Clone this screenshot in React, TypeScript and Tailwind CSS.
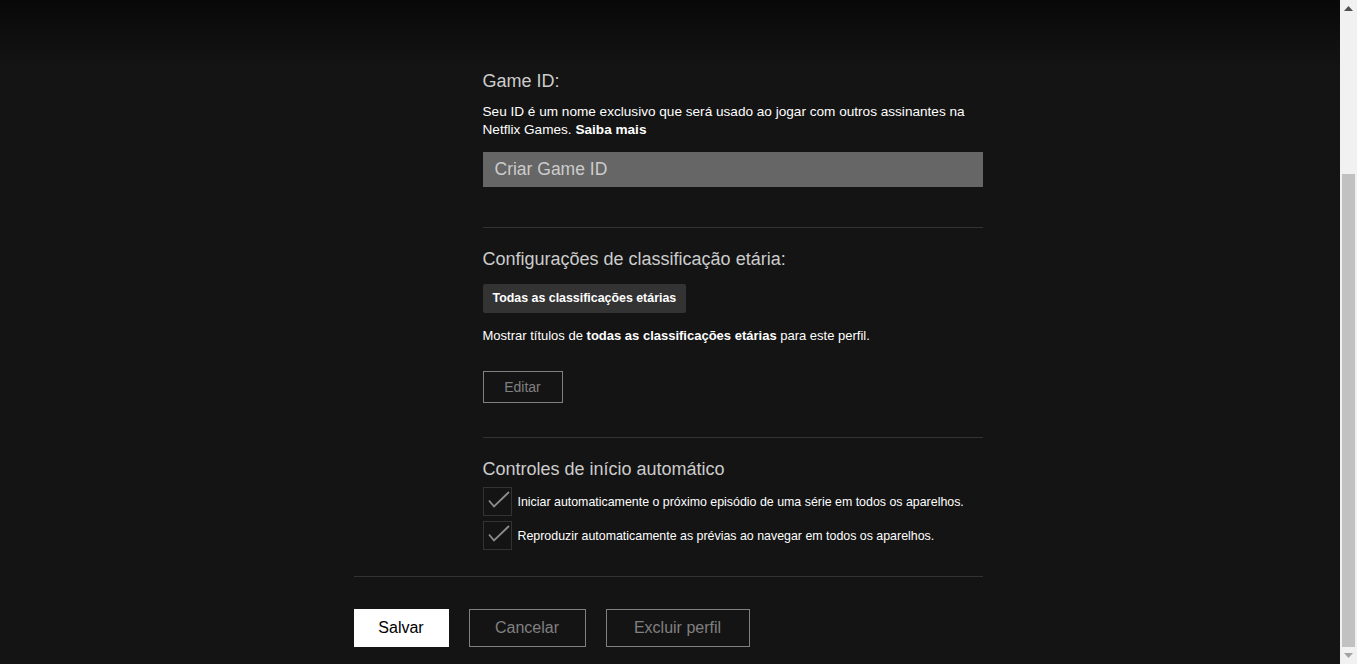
import React from "react";

// Faux classic scrollbar, page is shown scrolled to the bottom
function Scrollbar() {
  return (
    <div className="flex h-full w-[17px] shrink-0 flex-col bg-[#f1f1f1]">
      <div className="flex h-[17px] items-center justify-center">
        <svg width="9" height="5" viewBox="0 0 9 5">
          <path d="M0 5 L4.5 0 L9 5 Z" fill="#505050" />
        </svg>
      </div>
      <div className="flex flex-1 flex-col px-[2px]">
        <div className="h-[157px]" />
        <div className="flex-1 bg-[#c1c1c1]" />
      </div>
      <div className="flex h-[17px] items-center justify-center">
        <svg width="9" height="5" viewBox="0 0 9 5">
          <path d="M0 0 L9 0 L4.5 5 Z" fill="#a3a3a3" />
        </svg>
      </div>
    </div>
  );
}

function Check({ label }: { label: string }) {
  return (
    <label className="flex items-center gap-[6px]">
      <span className="flex h-[29px] w-[29px] shrink-0 items-center justify-center border border-[#333]">
        <svg width="29" height="29" viewBox="0 0 29 29" className="-m-px">
          <path d="M6 13.5 L11 19.5 L26 5" fill="none" stroke="#8c8c8c" strokeWidth="1.8" />
        </svg>
      </span>
      <span className="whitespace-nowrap text-[12.4px] leading-[18px] text-white">{label}</span>
    </label>
  );
}

export default function App() {
  return (
    <div className="flex h-[664px] w-full overflow-hidden bg-[#141414] font-['Liberation_Sans',Arial,sans-serif]">
      <main className="relative flex-1 overflow-hidden">
        <div className="absolute inset-x-0 top-0 h-[68px] bg-linear-to-b from-black/60 to-transparent" />

        <div className="mx-auto w-[633px] pt-[69px] pr-[4px] pb-[17px]">
          <div className="flex">
            {/* avatar column, scrolled out of view */}
            <div className="w-[129px] shrink-0" />

            <div className="w-[500px]">
              <h2 className="text-[18px] leading-[24px] text-[#cccccc]">Game ID:</h2>
              <p className="mt-[10px] text-[13.6px] leading-[18px] text-white">
                Seu ID é um nome exclusivo que será usado ao jogar com outros assinantes na Netflix Games.{" "}
                <span className="font-bold">Saiba mais</span>
              </p>
              <input
                className="mt-[13px] block h-[35px] w-full bg-[#666] px-3 text-[17.5px] text-white outline-none placeholder:text-[#cccccc]"
                placeholder="Criar Game ID"
              />

              <div className="mt-[40px] border-t border-[#333]" />

              <h2 className="mt-[19px] text-[18px] leading-[24px] text-[#cccccc]">
                Configurações de classificação etária:
              </h2>
              <div className="mt-[13px] inline-flex h-[29px] items-center rounded-[2px] bg-[#333] px-[10px] text-[12.4px] font-bold text-white">
                Todas as classificações etárias
              </div>
              <p className="mt-[14px] text-[13px] leading-[18px] text-white">
                Mostrar títulos de <span className="font-bold">todas as classificações etárias</span> para este perfil.
              </p>
              <button className="mt-[26px] block h-[32px] w-[80px] border border-[#808080] text-[14px] text-[#808080]">
                Editar
              </button>

              <div className="mt-[34px] border-t border-[#333]" />

              <h2 className="mt-[19px] text-[18px] leading-[24px] text-[#cccccc]">Controles de início automático</h2>
              <div className="mt-[6px] flex flex-col gap-[5px]">
                <Check label="Iniciar automaticamente o próximo episódio de uma série em todos os aparelhos." />
                <Check label="Reproduzir automaticamente as prévias ao navegar em todos os aparelhos." />
              </div>
            </div>
          </div>

          <div className="mt-[26px] border-t border-[#333]" />

          <div className="mt-[32px] flex gap-5">
            <button className="h-[38px] w-[95px] border border-white bg-white text-[16px] text-black">Salvar</button>
            <button className="h-[38px] w-[117px] border border-[#808080] text-[16px] text-[#808080]">Cancelar</button>
            <button className="h-[38px] w-[144px] border border-[#808080] text-[16px] text-[#808080]">Excluir perfil</button>
          </div>
        </div>
      </main>
      <Scrollbar />
    </div>
  );
}
